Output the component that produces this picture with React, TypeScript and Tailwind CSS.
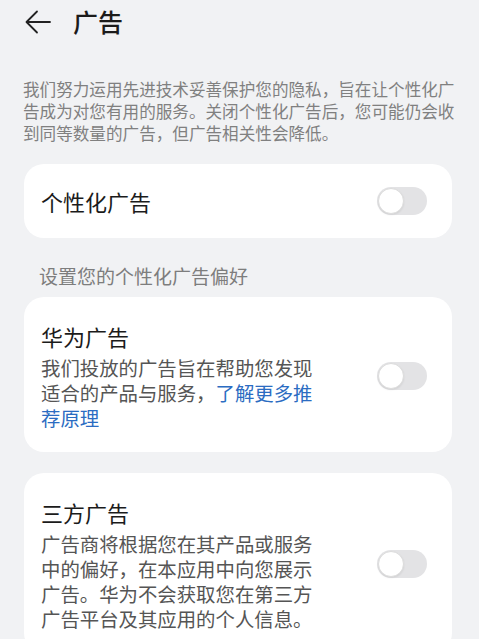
import React from 'react';

function Toggle() {
  return (
    <div className="relative h-[28px] w-[50px] shrink-0 rounded-full bg-[#e3e3e5]">
      <div className="absolute left-[1px] top-[1px] h-[26px] w-[26px] rounded-full border border-[#dcdcdc] bg-white shadow-[0_1px_2px_rgba(0,0,0,0.08)]" />
    </div>
  );
}

interface OptionCardProps {
  title: string;
  children: React.ReactNode;
}

function OptionCard({ title, children }: OptionCardProps) {
  return (
    <div className="flex items-center justify-between rounded-[20px] bg-white pl-[17px] pr-[25px] pt-6 pb-[22px]">
      <div>
        <div className="text-[22px] leading-[30px] text-[#1b1b1b]">{title}</div>
        <p className="mt-1 w-[280px] text-[19.4px] leading-[25px] text-[#555555]">{children}</p>
      </div>
      <Toggle />
    </div>
  );
}

export default function App() {
  return (
    <div
      className="min-h-screen bg-[#f1f2f4]"
      style={{ fontFamily: '"Noto Sans CJK SC", "Noto Sans", sans-serif' }}
    >
      {/* Header */}
      <div className="flex h-[44px] items-center pl-[25px]">
        <svg width="26" height="24" viewBox="0 0 26 24" fill="none" stroke="#222" strokeWidth="1.8" strokeLinecap="round" strokeLinejoin="round">
          <path d="M2 12h23" />
          <path d="M12 1.5L1.5 12 12 22.5" />
        </svg>
        <h1 className="ml-[22px] text-[25px] font-medium text-[#1b1b1b]">广告</h1>
      </div>

      <p className="mt-[34px] px-[23px] text-[16.6px] leading-[22px] text-[#808080]">
        我们努力运用先进技术妥善保护您的隐私，旨在让个性化广告成为对您有用的服务。关闭个性化广告后，您可能仍会收到同等数量的广告，但广告相关性会降低。
      </p>

      <div className="mt-[20px] pl-[24px] pr-[27px]">
        <div className="flex h-[74px] items-center justify-between rounded-[20px] bg-white pl-[17px] pr-[25px]">
          <span className="text-[22px] text-[#1b1b1b]">个性化广告</span>
          <Toggle />
        </div>

        <div className="mt-[25px] mb-[8px] pl-[15px] text-[19px] leading-[26px] text-[#7d7d7d]">
          设置您的个性化广告偏好
        </div>

        <OptionCard title="华为广告">
          我们投放的广告旨在帮助您发现适合的产品与服务，
          <span className="text-[#2b6cc2]">了解更多推荐原理</span>
        </OptionCard>

        <div className="mt-[21px]">
          <OptionCard title="三方广告">
            广告商将根据您在其产品或服务中的偏好，在本应用中向您展示广告。华为不会获取您在第三方广告平台及其应用的个人信息。
          </OptionCard>
        </div>
      </div>
    </div>
  );
}
